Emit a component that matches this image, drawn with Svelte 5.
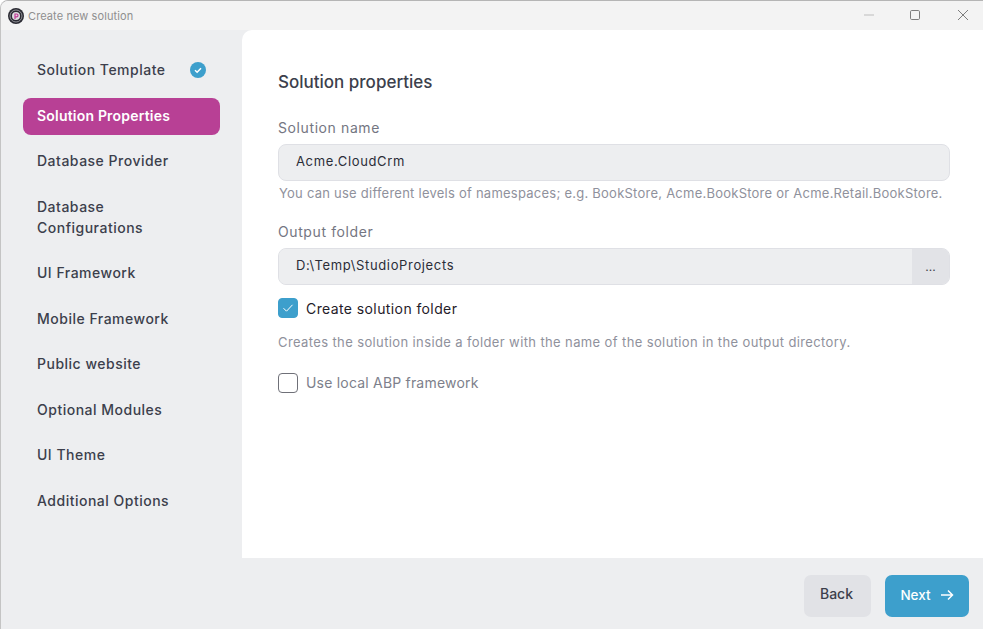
<script>
  const steps = [
    { label: 'Solution Template', done: true },
    { label: 'Solution Properties', active: true },
    { label: 'Database Provider' },
    { label: 'Database Configurations', wrap: true },
    { label: 'UI Framework' },
    { label: 'Mobile Framework' },
    { label: 'Public website' },
    { label: 'Optional Modules' },
    { label: 'UI Theme' },
    { label: 'Additional Options' }
  ];

  let solutionName = 'Acme.CloudCrm';
  let outputFolder = 'D:\\Temp\\StudioProjects';
  let createFolder = true;
  let useLocal = false;
</script>

<div class="window">
  <span class="behind"></span>
  <header class="titlebar">
    <div class="title">
      <svg class="logo" width="16" height="16" viewBox="0 0 16 16" fill="none">
        <circle cx="8" cy="8" r="8" fill="#2b2b33" />
        <circle cx="8" cy="8" r="6" stroke="#a9a9b0" stroke-width="0.8" />
        <circle cx="8" cy="8" r="4" fill="#dcdce0" />
        <path d="M7 11V6h1.6a1.4 1.4 0 0 1 0 2.8H7" stroke="#c23a96" stroke-width="1.2" />
      </svg>
      <span>Create new solution</span>
    </div>
    <div class="controls">
      <svg width="12" height="12" viewBox="0 0 12 12"><path d="M1 6h10" stroke="#cfcfcf" stroke-width="1.4" /></svg>
      <svg class="maximize" width="12" height="12" viewBox="0 0 12 12" fill="none"><rect x="1.5" y="1.5" width="9" height="9" rx="1.2" stroke="#7d7d7d" /></svg>
      <svg width="12" height="12" viewBox="0 0 12 12" fill="none"><path d="M1 1l10 10M11 1L1 11" stroke="#7d7d7d" /></svg>
    </div>
  </header>

  <div class="body">
    <nav class="sidebar">
      {#each steps as step}
        <div class="step" class:active={step.active} class:wrap={step.wrap}>
          <span class="step-label">{step.label}</span>
          {#if step.done}
            <svg class="done" width="16" height="16" viewBox="0 0 16 16" fill="none">
              <circle cx="8" cy="8" r="8" fill="#3d9fcc" />
              <path d="M5 8.3l2.1 2L11 6.2" stroke="#fff" stroke-width="1.5" />
            </svg>
          {/if}
        </div>
      {/each}
    </nav>

    <main class="panel">
      <h2>Solution properties</h2>

      <label class="field-label" for="solution-name">Solution name</label>
      <input id="solution-name" class="input" bind:value={solutionName} />
      <p class="hint first">You can use different levels of namespaces; e.g. BookStore, Acme.BookStore or Acme.Retail.BookStore.</p>

      <label class="field-label second" for="output-folder">Output folder</label>
      <div class="input-group">
        <input id="output-folder" class="input" bind:value={outputFolder} />
        <button type="button" class="browse">...</button>
      </div>

      <label class="check checked-row">
        <input type="checkbox" bind:checked={createFolder} />
        <span class="box" class:on={createFolder}>
          {#if createFolder}
            <svg width="12" height="10" viewBox="0 0 12 10" fill="none"><path d="M1.5 5.2l3 3L10.5 1.8" stroke="#fff" stroke-width="1" /></svg>
          {/if}
        </span>
        <span class="check-text">Create solution folder</span>
      </label>
      <p class="hint second-hint">Creates the solution inside a folder with the name of the solution in the output directory.</p>

      <label class="check muted">
        <input type="checkbox" bind:checked={useLocal} />
        <span class="box" class:on={useLocal}></span>
        <span class="check-text">Use local ABP framework</span>
      </label>
    </main>
  </div>

  <footer class="footer">
    <button type="button" class="btn back">Back</button>
    <button type="button" class="btn next">
      Next
      <svg width="14" height="12" viewBox="0 0 14 12" fill="none"><path d="M1 6h11.5M8 1.5L12.5 6 8 10.5" stroke="#fff" stroke-width="1.5" /></svg>
    </button>
  </footer>
</div>

<style>
  :global(body) {
    margin: 0;
    background: #fff;
  }

  .window {
    position: relative;
    width: 983px;
    height: 629px;
    box-sizing: border-box;
    display: flex;
    flex-direction: column;
    background: #edeef0;
    border-top: 1px solid #b5b5b5;
    border-left: 1px solid #c4c4c4;
    border-top-left-radius: 8px;
    overflow: hidden;
    font-family: Inter, "Liberation Sans", sans-serif;
    color: #3c3f4c;
  }

  /* sliver of the desktop showing above the title bar */
  .behind {
    position: absolute;
    top: -1px;
    left: 822px;
    width: 26px;
    height: 1px;
    background: #c9a08a;
  }

  .titlebar {
    height: 29px;
    flex: none;
    display: flex;
    justify-content: space-between;
    align-items: center;
    background: #f3f3f3;
  }

  .title {
    display: flex;
    align-items: center;
    gap: 4px;
    padding-left: 7px;
    font-size: 11px;
    letter-spacing: 0.1px;
    color: #8f8f8f;
  }

  .controls {
    display: flex;
    align-items: center;
    gap: 35px;
    padding: 0 14px 2px 0;
  }

  .maximize {
    margin: 0 1px 0 -1px;
  }

  .body {
    flex: 1;
    min-height: 0;
    display: flex;
  }

  .sidebar {
    width: 241px;
    flex: none;
    box-sizing: border-box;
    padding: 22px 22px 0;
    display: flex;
    flex-direction: column;
    gap: 8px;
  }

  .step {
    min-height: 37.5px;
    box-sizing: border-box;
    display: flex;
    align-items: center;
    justify-content: space-between;
    padding: 0 14px 2.5px;
    border-radius: 8px;
    font-size: 14px;
    font-weight: 500;
    line-height: 21px;
    letter-spacing: 0.5px;
  }

  .step.wrap .step-label {
    width: 130px;
  }

  .step.wrap {
    min-height: 58.5px;
  }

  .step.active {
    background: #b84095;
    color: #fff;
    font-weight: 600;
    letter-spacing: 0.2px;
  }

  .panel {
    flex: 1;
    background: #fff;
    border-top-left-radius: 10px;
    padding: 0 33px 0 36px;
    display: flex;
    flex-direction: column;
    align-items: stretch;
  }

  h2 {
    margin: 41px 0 0;
    font-size: 17px;
    font-weight: 500;
    line-height: 22px;
    color: #3c3f4c;
  }

  .field-label {
    margin-top: 25px;
    font-size: 14px;
    line-height: 20px;
    letter-spacing: 0.6px;
    color: #747682;
  }

  .field-label.second {
    margin-top: 19px;
  }

  .input {
    display: block;
    width: 100%;
    height: 37px;
    margin-top: 6px;
    box-sizing: border-box;
    padding: 0 16px 3px 17px;
    background: #edeef0;
    border: 1px solid #dfe0e5;
    border-radius: 8px;
    font: inherit;
    font-size: 13px;
    letter-spacing: 0.65px;
    color: #2b2d38;
    outline: none;
  }

  .input-group {
    display: flex;
    margin-top: 6px;
    height: 37px;
    border: 1px solid #dfe0e5;
    border-radius: 8px;
    box-sizing: border-box;
    overflow: hidden;
    background: #edeef0;
  }

  .input-group .input {
    flex: 1;
    height: 100%;
    margin: 0;
    border: none;
    border-radius: 0;
  }

  .browse {
    width: 37px;
    border: none;
    background: #e2e3e7;
    color: #3c3f4c;
    font: inherit;
    font-size: 12px;
    padding: 0;
  }

  .hint {
    margin: 0;
    font-size: 13px;
    line-height: 20px;
    color: #8f919c;
  }

  .hint.first {
    margin-top: 2px;
    padding-left: 1px;
    letter-spacing: 0.24px;
  }

  .hint.second-hint {
    margin-top: 14px;
    letter-spacing: 0.38px;
  }

  .check {
    display: flex;
    align-items: center;
    gap: 8px;
    font-size: 14px;
    letter-spacing: 0.4px;
    color: #1f2029;
  }

  .checked-row {
    margin-top: 13px;
  }

  .check.muted {
    margin-top: 21px;
    letter-spacing: 0.2px;
    color: #7d7f8b;
  }

  .check.muted .check-text {
    margin-bottom: 2px;
  }

  .check input {
    position: absolute;
    opacity: 0;
    width: 0;
    height: 0;
  }

  .box {
    width: 20px;
    height: 20px;
    box-sizing: border-box;
    display: flex;
    align-items: center;
    justify-content: center;
    background: #fff;
    border: 1px solid #6f7078;
    border-radius: 4px;
  }

  .box.on {
    background: #3d9fcc;
    border-color: #3d9fcc;
  }

  .footer {
    height: 71px;
    flex: none;
    display: flex;
    justify-content: flex-end;
    align-items: flex-start;
    gap: 14px;
    padding: 17px 14px 0 0;
    box-sizing: border-box;
  }

  .btn {
    height: 42px;
    border: none;
    border-radius: 7px;
    font: inherit;
    font-size: 14px;
    font-weight: 500;
    padding: 0 0 5px;
  }

  .back {
    width: 67px;
    padding-right: 2px;
    background: #e1e2e6;
    color: #3c3f4c;
  }

  .next {
    width: 84px;
    padding-bottom: 2px;
    font-size: 13.5px;
    background: #3d9fcc;
    color: #fff;
    display: flex;
    align-items: center;
    justify-content: center;
    gap: 9px;
  }
</style>
